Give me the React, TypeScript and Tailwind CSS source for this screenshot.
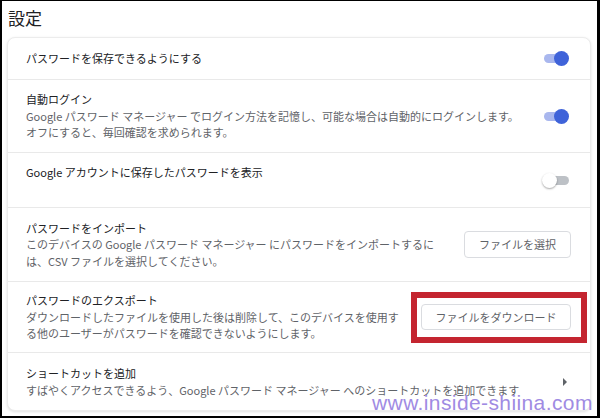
const font = { fontFamily: '"Noto Sans CJK JP", "Noto Sans", sans-serif' };

function Toggle({ on }: { on: boolean }) {
  if (on) {
    return (
      <div className="mr-[2px] flex shrink-0 items-center">
        <div className="h-[9px] w-[23px] rounded-full bg-[#a9b7ee]" />
        <div className="-ml-[13px] h-[15px] w-[15px] rounded-full bg-[#3f63d9]" />
      </div>
    );
  }
  return (
    <div className="mr-[2px] flex shrink-0 items-center">
      <div className="z-10 h-[15px] w-[15px] rounded-full bg-white shadow-[0_1px_2px_rgba(0,0,0,0.35)]" />
      <div className="-ml-[11px] h-[9px] w-[23px] rounded-full bg-[#bdc1c6]" />
    </div>
  );
}

function Row({
  height,
  title,
  desc,
  right,
  topAlign,
  last,
}: {
  height: string;
  title: string;
  desc?: React.ReactNode;
  right?: React.ReactNode;
  topAlign?: boolean;
  last?: boolean;
}) {
  return (
    <div
      className={`flex ${height} items-center justify-between pl-[18px] pr-[19px] ${
        last ? '' : 'border-b border-[#e9e9e9]'
      }`}
    >
      <div className={`leading-[16.5px] ${topAlign ? 'self-start pt-[11px]' : ''}`}>
        <div className="text-[11px] text-[#202124]">{title}</div>
        {desc && <div className="whitespace-nowrap text-[11px] text-[#5f6368]">{desc}</div>}
      </div>
      {right}
    </div>
  );
}

function Btn({ label, w, h }: { label: string; w: string; h: string }) {
  return (
    <button
      className={`${w} ${h} shrink-0 rounded-[4px] border border-[#dadce0] bg-white text-[11px] text-[#5f6368]`}
    >
      {label}
    </button>
  );
}

export default function App() {
  return (
    <div
      className="relative h-[418px] w-[600px] overflow-hidden border-b-2 border-l-2 border-r-[3px] border-t border-black bg-white"
      style={font}
    >
      <div className="h-[36px] pl-[6px] pt-[5px] text-[17px] leading-[24px] text-[#202124]">設定</div>

      <div className="ml-[5px] w-[584px] rounded-[8px] border border-[#ececec] bg-white shadow-[0_1px_3px_rgba(0,0,0,0.12)]">
        <Row height="h-[42px]" title="パスワードを保存できるようにする" right={<Toggle on />} />
        <Row
          height="h-[73px]"
          title="自動ログイン"
          desc={
            <>
              Google パスワード マネージャー でログイン方法を記憶し、可能な場合は自動的にログインします。
              <br />
              オフにすると、毎回確認を求められます。
            </>
          }
          right={<Toggle on />}
        />
        <Row
          height="h-[55px]"
          title="Google アカウントに保存したパスワードを表示"
          topAlign
          right={<Toggle on={false} />}
        />
        <Row
          height="h-[74px]"
          title="パスワードをインポート"
          desc={
            <>
              このデバイスの Google パスワード マネージャー にパスワードをインポートするに
              <br />
              は、CSV ファイルを選択してください。
            </>
          }
          right={<Btn label="ファイルを選択" w="w-[107px]" h="h-[27px]" />}
        />
        <Row
          height="h-[71px]"
          title="パスワードのエクスポート"
          desc={
            <>
              ダウンロードしたファイルを使用した後は削除して、このデバイスを使用す
              <br />
              る他のユーザーがパスワードを確認できないようにします。
            </>
          }
          right={<Btn label="ファイルをダウンロード" w="w-[150px]" h="h-[26px]" />}
        />
        <Row
          height="h-[57px]"
          title="ショートカットを追加"
          desc="すばやくアクセスできるよう、Google パスワード マネージャー へのショートカットを追加できます"
          right={
            <div className="mr-[4px] h-0 w-0 border-y-[4px] border-l-[4px] border-y-transparent border-l-[#5f6368]" />
          }
          last
        />
      </div>

      {/* red highlight annotation */}
      <div className="absolute left-[409px] top-[291px] h-[51px] w-[176px] border-[6px] border-[#c42530]" />

      {/* watermark */}
      <div
        className="absolute left-[370px] top-[391px] text-[21px] leading-[21px] tracking-[0.4px] text-[#a08be3]"
        style={{ fontFamily: '"Liberation Sans", Arial, sans-serif' }}
      >
        www.inside-shiina.com
      </div>
    </div>
  );
}
